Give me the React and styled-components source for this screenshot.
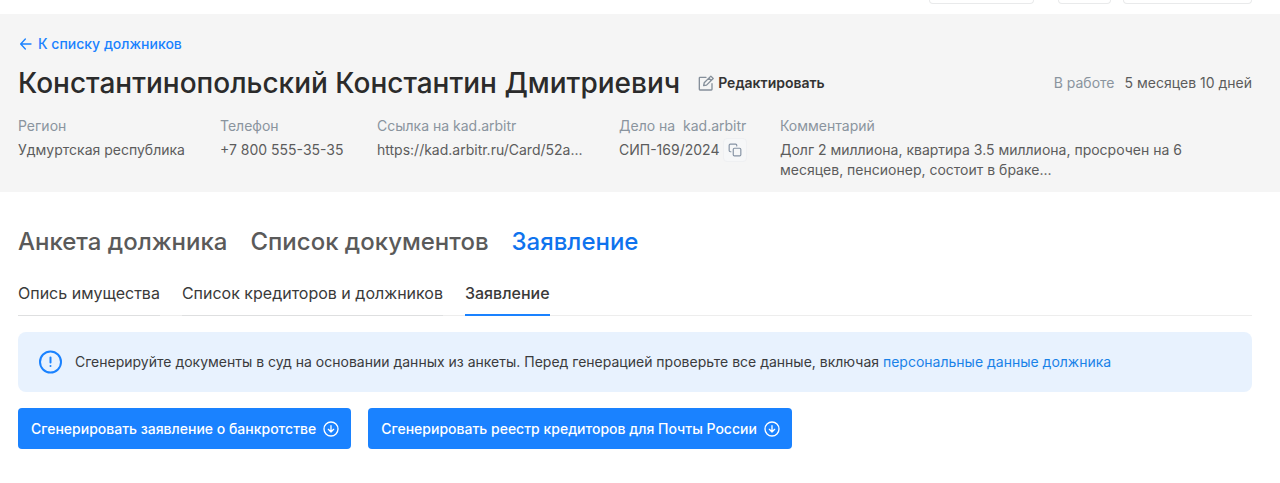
import React from "react";
import styled, { createGlobalStyle } from "styled-components";

const GlobalStyle = createGlobalStyle`
  *, *::before, *::after { box-sizing: border-box; }
  body {
    margin: 0;
    background: #fff;
    color: #3a3b3d;
    font-family: Inter, "Liberation Sans", sans-serif;
    font-size: 14px;
    line-height: 20px;
  }
  button { font: inherit; cursor: pointer; }
  a { text-decoration: none; }
`;

const TopBar = styled.div`
  display: flex;
  justify-content: flex-end;
  height: 14px;
  padding: 0 28px;
  overflow: hidden;
`;

const TopSlot = styled.div`
  width: ${(p) => p.$width}px;
  height: 4px;
  margin-left: ${(p) => p.$gap || 0}px;
  border: 1px solid #e9eaeb;
  border-top: 0;
  border-radius: 0 0 4px 4px;
`;

const Header = styled.header`
  padding: 20px 28px 12px 18px;
  background: #f5f5f5;
`;

const BackLink = styled.a`
  display: inline-flex;
  align-items: center;
  gap: 4px;
  color: #1a82ff;
  font-weight: 500;
`;

const TitleRow = styled.div`
  display: flex;
  align-items: center;
  gap: 18px;
  margin-top: 6px;
`;

const Title = styled.h1`
  margin: 0;
  color: #2b2b2b;
  font-size: 28px;
  font-weight: 500;
  line-height: 40px;
`;

const EditButton = styled.button`
  display: flex;
  align-items: center;
  gap: 4px;
  padding: 0;
  border: 0;
  background: none;
  color: #333;
  font-weight: 600;
`;

const WorkTime = styled.div`
  display: flex;
  gap: 10px;
  margin-left: auto;
  color: #5c5c5c;
`;

const Muted = styled.span`
  color: #8a949e;
`;

const Details = styled.dl`
  display: grid;
  grid-template-columns: 202px 157px 242px 161px minmax(0, 420px);
  margin: 13px 0 0;
`;

const Detail = styled.div`
  min-width: 0;
`;

const DetailLabel = styled.dt`
  color: #8a949e;
  white-space: pre;
`;

const DetailValue = styled.dd`
  display: flex;
  align-items: center;
  margin: 4px 0 0;
  color: #5c5c5c;
`;

const CopyButton = styled.button`
  display: flex;
  align-items: center;
  justify-content: center;
  width: 24px;
  height: 24px;
  margin: -2px 0 -2px 4px;
  padding: 0;
  border: 1px solid #eff0f2;
  border-radius: 4px;
  background: #f6f7f8;
`;

const Content = styled.main`
  padding: 33px 28px 32px 18px;
`;

const Tabs = styled.nav`
  display: flex;
  gap: 23px;
`;

const Tab = styled.a`
  color: ${(p) => (p.$active ? "#0f73ee" : "#5a5a5a")};
  font-size: 24px;
  font-weight: 500;
  line-height: 34px;
`;

const SubTabs = styled.nav`
  display: flex;
  gap: 22px;
  margin-top: 22px;
  box-shadow: inset 0 -1px #ededed;
`;

const SubTab = styled.a`
  padding-bottom: 11px;
  box-shadow: ${(p) => (p.$active ? "inset 0 -2px #1a82ff" : "inset 0 -1px #dedfe0")};
  color: #3a3a3a;
  font-size: 16px;
  font-weight: ${(p) => (p.$active ? 500 : 400)};
  line-height: 24px;
`;

const Notice = styled.section`
  display: flex;
  align-items: center;
  gap: 13px;
  margin-top: 16px;
  padding: 18px 20px;
  border-radius: 8px;
  background: #e8f2fe;

  p { margin: 0; }
  a { color: #1a82e8; }
`;

const Actions = styled.div`
  display: flex;
  gap: 17px;
  margin-top: 16px;
`;

const PrimaryButton = styled.button`
  display: flex;
  align-items: center;
  gap: 7px;
  height: 41px;
  padding: 0 12px 0 13px;
  border: 0;
  border-radius: 4px;
  background: #1a82ff;
  color: #fff;
  font-weight: 500;
`;

const Svg = styled.svg.attrs({ viewBox: "0 0 24 24", fill: "none", "aria-hidden": true })`
  flex: none;
  width: ${(p) => p.$size}px;
  height: ${(p) => p.$size}px;
  stroke: ${(p) => p.$color || "currentColor"};
  stroke-width: ${(p) => p.$stroke || 2};
  stroke-linecap: round;
  stroke-linejoin: round;
`;

const ArrowLeft = () => (
  <Svg $size={16}>
    <path d="M19.500 12H4.500M11 4.500l-7 7.500 7 7.500" />
  </Svg>
);

const EditIcon = () => (
  <Svg $size={16} $color="#858f9a">
    <path d="M12 3.500H3a1 1 0 0 0-1 1v17a1 1 0 0 0 1 1h17a1 1 0 0 0 1-1V13" />
    <path d="M8.500 16l.8-4.300L19.300 1.700l3.500 3.500L12.800 15.200zM16.300 4.700l3.500 3.500" />
  </Svg>
);

const CopyIcon = () => (
  <Svg $size={14} $color="#8592a3">
    <rect x="9" y="9" width="13" height="13" rx="2" />
    <path d="M5 15H4a2 2 0 0 1-2-2V4a2 2 0 0 1 2-2h9a2 2 0 0 1 2 2v1" />
  </Svg>
);

const AlertIcon = () => (
  <Svg $size={24} $color="#1a82ff">
    <circle cx="12.500" cy="12" r="10.500" />
    <path d="M12.500 7.500v5M12.500 16v.1" />
  </Svg>
);

const DownloadIcon = () => (
  <Svg $size={16}>
    <circle cx="12" cy="12" r="10.500" />
    <path d="M12 7v9.500M8 12.500l4 4 4-4" />
  </Svg>
);

export default function App() {
  return (
    <>
      <GlobalStyle />
      <TopBar>
        <TopSlot $width={105} />
        <TopSlot $width={53} $gap={24} />
        <TopSlot $width={129} $gap={12} />
      </TopBar>
      <Header>
        <BackLink href="#debtors">
          <ArrowLeft />
          К списку должников
        </BackLink>
        <TitleRow>
          <Title>Константинопольский Константин Дмитриевич</Title>
          <EditButton type="button">
            <EditIcon />
            Редактировать
          </EditButton>
          <WorkTime>
            <Muted>В работе</Muted>
            <span>5 месяцев 10 дней</span>
          </WorkTime>
        </TitleRow>
        <Details>
          <Detail>
            <DetailLabel>Регион</DetailLabel>
            <DetailValue>Удмуртская республика</DetailValue>
          </Detail>
          <Detail>
            <DetailLabel>Телефон</DetailLabel>
            <DetailValue>+7 800 555-35-35</DetailValue>
          </Detail>
          <Detail>
            <DetailLabel>Ссылка на kad.arbitr</DetailLabel>
            <DetailValue>https://kad.arbitr.ru/Card/52a...</DetailValue>
          </Detail>
          <Detail>
            <DetailLabel>{"Дело на  kad.arbitr"}</DetailLabel>
            <DetailValue>
              СИП-169/2024
              <CopyButton type="button" aria-label="Скопировать номер дела">
                <CopyIcon />
              </CopyButton>
            </DetailValue>
          </Detail>
          <Detail>
            <DetailLabel>Комментарий</DetailLabel>
            <DetailValue>
              Долг 2 миллиона, квартира 3.5 миллиона, просрочен на 6 месяцев, пенсионер, состоит в браке...
            </DetailValue>
          </Detail>
        </Details>
      </Header>
      <Content>
        <Tabs>
          <Tab href="#profile">Анкета должника</Tab>
          <Tab href="#documents">Список документов</Tab>
          <Tab href="#application" $active aria-current="page">Заявление</Tab>
        </Tabs>
        <SubTabs>
          <SubTab href="#property">Опись имущества</SubTab>
          <SubTab href="#creditors">Список кредиторов и должников</SubTab>
          <SubTab href="#statement" $active aria-current="page">Заявление</SubTab>
        </SubTabs>
        <Notice>
          <AlertIcon />
          <p>
            Сгенерируйте документы в суд на основании данных из анкеты. Перед генерацией проверьте все данные, включая{" "}
            <a href="#personal">персональные данные должника</a>
          </p>
        </Notice>
        <Actions>
          <PrimaryButton type="button">
            Сгенерировать заявление о банкротстве
            <DownloadIcon />
          </PrimaryButton>
          <PrimaryButton type="button">
            Сгенерировать реестр кредиторов для Почты России
            <DownloadIcon />
          </PrimaryButton>
        </Actions>
      </Content>
    </>
  );
}
